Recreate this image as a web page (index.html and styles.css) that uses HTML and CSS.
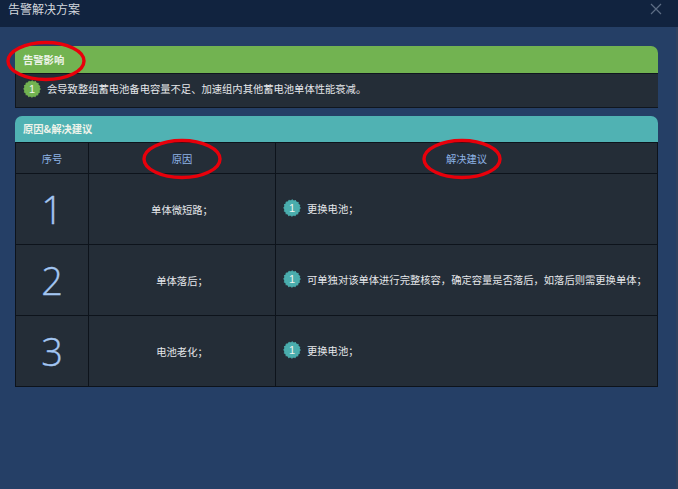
FILE: index.html
```html
<!DOCTYPE html>
<html lang="zh">
<head>
    <meta charset="UTF-8">
    <meta name="viewport" content="width=device-width, initial-scale=1.0">
    <title>告警解决方案</title>
    <link rel="stylesheet" href="styles.css">
</head>
<body>
    <div class="dialog">
        <!-- title bar -->
        <div class="title-bar">
            <span class="title">告警解决方案</span>
            <svg class="close" width="12" height="12" viewBox="0 0 12 12">
                <path d="M1 1 L11 11 M11 1 L1 11" stroke="#5d6d85" stroke-width="1.2" fill="none"/>
            </svg>
        </div>

        <div class="content">
            <!-- impact -->
            <div class="panel">
                <div class="panel-head head-green">告警影响</div>
                <div class="impact-body">
                    <svg class="badge" viewBox="0 0 18 18">
                        <circle class="badge-fill-green" cx="9" cy="9" r="8.1"/>
                        <circle class="badge-edge-green" cx="9" cy="9" r="8.1"/>
                        <text x="9" y="12.8">1</text>
                    </svg>
                    <span>会导致整组蓄电池备电容量不足、加速组内其他蓄电池单体性能衰减。</span>
                </div>
            </div>

            <!-- causes and suggestions -->
            <div class="panel">
                <div class="panel-head head-teal">原因&amp;解决建议</div>
                <table class="cause-table">
                    <thead>
                        <tr>
                            <th class="col-no">序号</th>
                            <th class="col-cause">原因</th>
                            <th>解决建议</th>
                        </tr>
                    </thead>
                    <tbody>
                        <tr>
                            <td class="num">1</td>
                            <td class="cause">单体微短路；</td>
                            <td>
                                <div class="fix">
                                    <svg class="badge" viewBox="0 0 18 18">
                                        <circle class="badge-fill-teal" cx="9" cy="9" r="8.1"/>
                                        <circle class="badge-edge-teal" cx="9" cy="9" r="8.1"/>
                                        <text x="9" y="12.8">1</text>
                                    </svg>
                                    <span>更换电池；</span>
                                </div>
                            </td>
                        </tr>
                        <tr>
                            <td class="num">2</td>
                            <td class="cause">单体落后；</td>
                            <td>
                                <div class="fix">
                                    <svg class="badge" viewBox="0 0 18 18">
                                        <circle class="badge-fill-teal" cx="9" cy="9" r="8.1"/>
                                        <circle class="badge-edge-teal" cx="9" cy="9" r="8.1"/>
                                        <text x="9" y="12.8">1</text>
                                    </svg>
                                    <span>可单独对该单体进行完整核容，确定容量是否落后，如落后则需更换单体；</span>
                                </div>
                            </td>
                        </tr>
                        <tr>
                            <td class="num">3</td>
                            <td class="cause">电池老化；</td>
                            <td>
                                <div class="fix">
                                    <svg class="badge" viewBox="0 0 18 18">
                                        <circle class="badge-fill-teal" cx="9" cy="9" r="8.1"/>
                                        <circle class="badge-edge-teal" cx="9" cy="9" r="8.1"/>
                                        <text x="9" y="12.8">1</text>
                                    </svg>
                                    <span>更换电池；</span>
                                </div>
                            </td>
                        </tr>
                    </tbody>
                </table>
            </div>
        </div>

        <!-- red marks drawn over the screenshot -->
        <svg class="mark mark-impact" width="80" height="42" viewBox="0 0 80 42">
            <ellipse cx="40" cy="21" rx="38" ry="18.5"/>
        </svg>
        <svg class="mark mark-cause" width="80" height="42" viewBox="0 0 80 42">
            <ellipse cx="40" cy="21" rx="38" ry="18.5"/>
        </svg>
        <svg class="mark mark-fix" width="80" height="42" viewBox="0 0 80 42">
            <ellipse cx="40" cy="21" rx="38" ry="18.5"/>
        </svg>
    </div>
</body>
</html>
```

FILE: styles.css
```css
html, body {
    margin: 0;
    padding: 0;
    height: 100%;
    overflow: hidden;
}

body {
    background-color: #253f66;
    font-family: "Noto Sans CJK SC", "Liberation Sans", sans-serif;
    color: #e4e7ea;
    font-size: 10.3px;
}

.dialog {
    position: relative;
    height: 100%;
    display: flex;
    flex-direction: column;
}

.title-bar {
    height: 27px;
    flex-shrink: 0;
    padding: 0 16px 0 8px;
    background-color: #11233f;
    display: flex;
    align-items: flex-start;
    justify-content: space-between;
}

.title {
    font-size: 12px;
    line-height: 18px;
    color: #d3d8de;
}

.close {
    margin-top: 3px;
}

.content {
    flex-grow: 1;
    padding: 19px 18px 0 15px;
    border-right: 2px solid #2f4260;
    display: flex;
    flex-direction: column;
    gap: 8px;
}

.panel-head {
    height: 27px;
    padding-left: 8px;
    box-sizing: border-box;
    border-radius: 7px 7px 0 0;
    font-weight: 700;
    line-height: 27px;
    color: #eef3ea;
}

.head-green {
    background-color: #72b351;
}

.head-teal {
    height: 26px;
    line-height: 26px;
    background-color: #50b2b3;
}

.impact-body {
    height: 35px;
    box-sizing: border-box;
    padding: 0 8px 4px 7px;
    display: flex;
    align-items: center;
    gap: 6px;
    background-color: #242d37;
    border: 1px solid #10161e;
    border-right: none;
}

.badge {
    width: 18px;
    height: 18px;
    flex-shrink: 0;
}

.badge text {
    font-family: "Liberation Sans", sans-serif;
    font-size: 11px;
    fill: #eef4f0;
    text-anchor: middle;
}

.badge-fill-green {
    fill: #72b351;
}

.badge-edge-green {
    fill: none;
    stroke: #72b351;
    stroke-width: 1.4;
    stroke-linecap: round;
    stroke-dasharray: 0 3.18;
}

.badge-fill-teal {
    fill: #4aadad;
}

.badge-edge-teal {
    fill: none;
    stroke: #4aadad;
    stroke-width: 1.4;
    stroke-linecap: round;
    stroke-dasharray: 0 3.18;
}

.cause-table {
    width: 100%;
    table-layout: fixed;
    border-collapse: collapse;
    background-color: #242d37;
}

.cause-table th,
.cause-table td {
    border: 1px solid #0d131b;
    padding: 0;
    text-align: center;
}

.cause-table th {
    height: 30px;
    font-weight: 400;
    color: #8fb4e6;
}

.cause-table td {
    height: 70px;
}

.col-no {
    width: 72px;
}

.col-cause {
    width: 186px;
}

.cause-table .num {
    font-family: "Open Sans", sans-serif;
    font-weight: 300;
    font-size: 38px;
    color: #a3c6f2;
    -webkit-text-stroke: 0.35px #a3c6f2;
}

.cause {
    padding-top: 1px;
}

.fix {
    display: flex;
    align-items: center;
    gap: 6px;
    padding: 0 0 2px 7px;
    text-align: left;
}

.mark {
    position: absolute;
    fill: none;
    stroke: #e8000b;
    stroke-width: 3.4;
}

.mark-impact {
    left: 6px;
    top: 40px;
}

.mark-cause {
    left: 142px;
    top: 138px;
}

.mark-fix {
    left: 422px;
    top: 138px;
}
```
